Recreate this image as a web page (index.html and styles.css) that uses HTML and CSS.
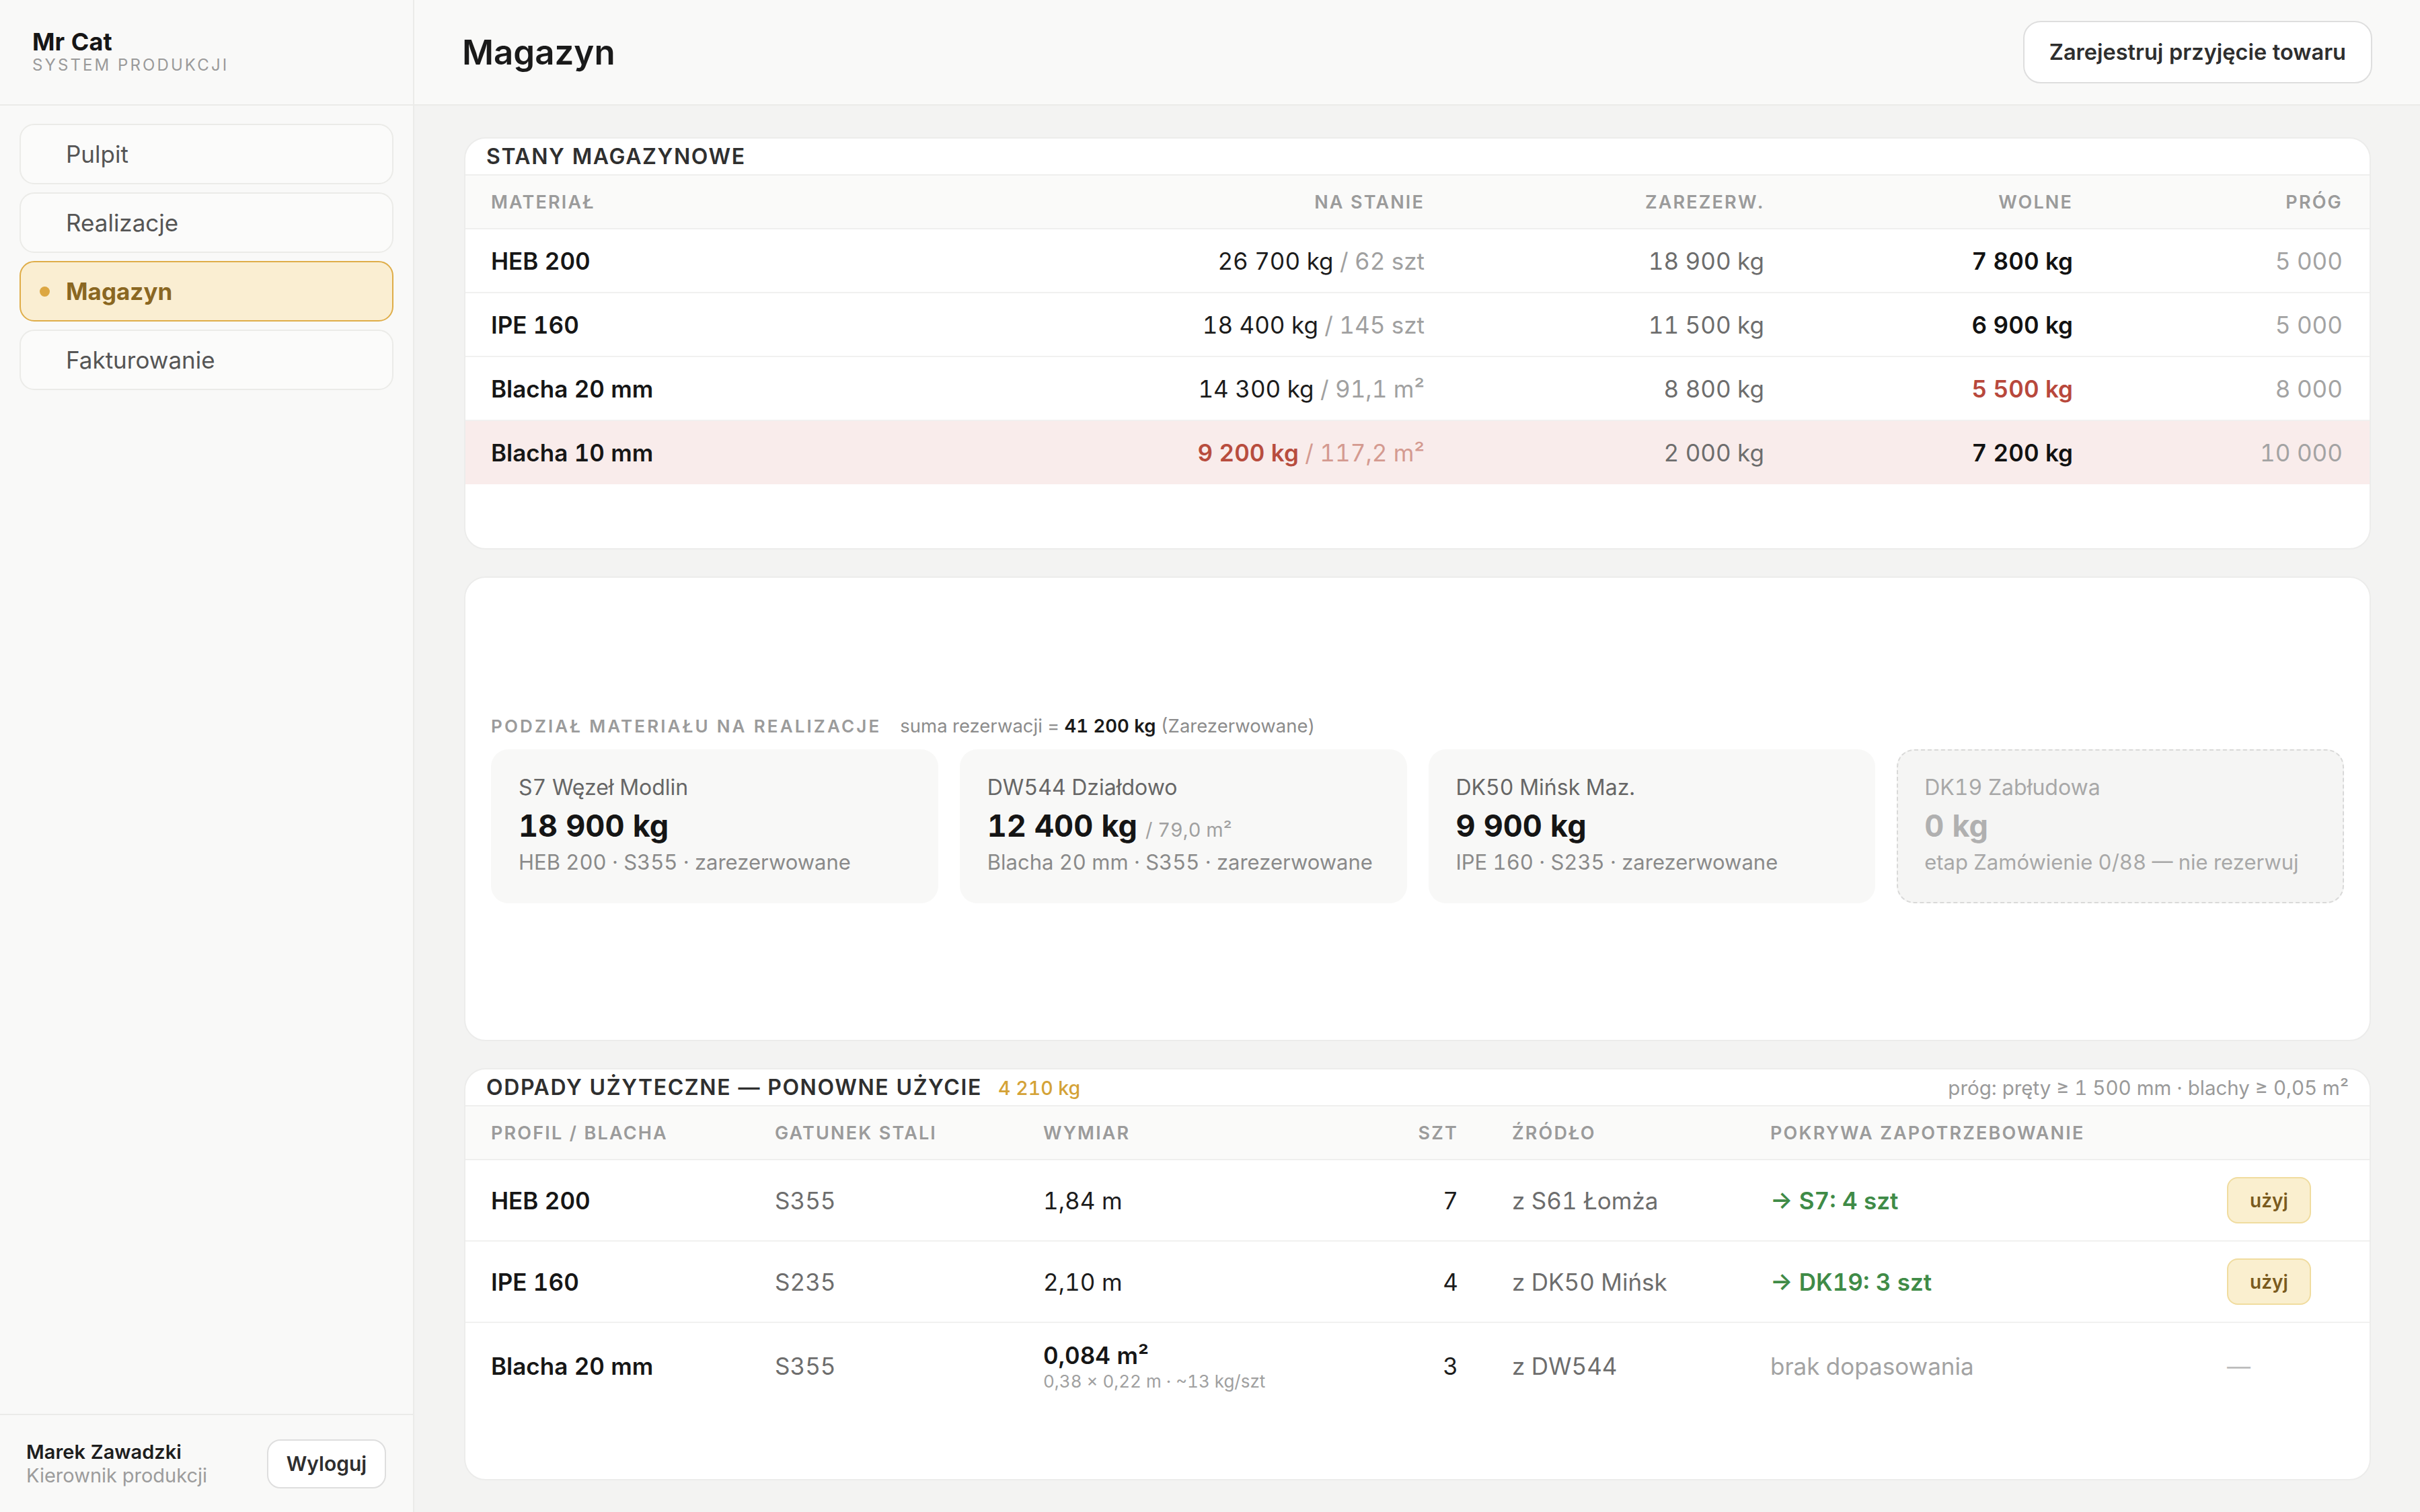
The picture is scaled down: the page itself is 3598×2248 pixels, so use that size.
FILE: index.html
```html
<!DOCTYPE html>
<html lang="pl">
<head>
    <meta charset="UTF-8">
    <meta name="viewport" content="width=device-width, initial-scale=1.0">
    <title>Magazyn — Mr Cat</title>
    <link rel="stylesheet" href="styles.css">
</head>
<body>
    <aside class="sidebar">
        <div class="brand">
            <div class="brand-name">Mr Cat</div>
            <div class="brand-sub">System produkcji</div>
        </div>
        <nav class="nav">
            <a class="nav-item" href="#">Pulpit</a>
            <a class="nav-item" href="#">Realizacje</a>
            <a class="nav-item active" href="#">Magazyn</a>
            <a class="nav-item" href="#">Fakturowanie</a>
        </nav>
        <div class="user">
            <div>
                <div class="user-name">Marek Zawadzki</div>
                <div class="user-role">Kierownik produkcji</div>
            </div>
            <button class="btn btn-small">Wyloguj</button>
        </div>
    </aside>

    <main class="main">
        <header class="topbar">
            <h1>Magazyn</h1>
            <button class="btn">Zarejestruj przyjęcie towaru</button>
        </header>

        <div class="content">
            <!-- Stany magazynowe -->
            <section class="card">
                <div class="card-head">
                    <h2>Stany magazynowe</h2>
                </div>
                <table class="table stock">
                    <colgroup>
                        <col style="width: 776px">
                        <col style="width: 690px">
                        <col style="width: 505px">
                        <col style="width: 459px">
                        <col style="width: 401px">
                    </colgroup>
                    <thead>
                        <tr>
                            <th>Materiał</th>
                            <th class="num">Na stanie</th>
                            <th class="num">Zarezerw.</th>
                            <th class="num">Wolne</th>
                            <th class="num">Próg</th>
                        </tr>
                    </thead>
                    <tbody>
                        <tr>
                            <td class="name">HEB 200</td>
                            <td class="num">26 700 kg <span class="unit">/ 62 szt</span></td>
                            <td class="num muted">18 900 kg</td>
                            <td class="num strong">7 800 kg</td>
                            <td class="num faint">5 000</td>
                        </tr>
                        <tr>
                            <td class="name">IPE 160</td>
                            <td class="num">18 400 kg <span class="unit">/ 145 szt</span></td>
                            <td class="num muted">11 500 kg</td>
                            <td class="num strong">6 900 kg</td>
                            <td class="num faint">5 000</td>
                        </tr>
                        <tr>
                            <td class="name">Blacha 20 mm</td>
                            <td class="num">14 300 kg <span class="unit">/ 91,1 m²</span></td>
                            <td class="num muted">8 800 kg</td>
                            <td class="num strong red">5 500 kg</td>
                            <td class="num faint">8 000</td>
                        </tr>
                        <tr class="low">
                            <td class="name">Blacha 10 mm</td>
                            <td class="num"><span class="red-val">9 200 kg</span> <span class="unit">/ 117,2 m²</span></td>
                            <td class="num muted">2 000 kg</td>
                            <td class="num strong">7 200 kg</td>
                            <td class="num faint">10 000</td>
                        </tr>
                    </tbody>
                </table>
            </section>

            <!-- Podział materiału -->
            <section class="card split">
                <div class="split-head">
                    <span class="label">Podział materiału na realizacje</span>
                    <span class="sum">suma rezerwacji = <b>41 200 kg</b> (Zarezerwowane)</span>
                </div>
                <div class="alloc-grid">
                    <div class="alloc">
                        <div class="alloc-name">S7 Węzeł Modlin</div>
                        <div class="alloc-val">18 900 kg</div>
                        <div class="alloc-meta">HEB 200 · S355 · zarezerwowane</div>
                    </div>
                    <div class="alloc">
                        <div class="alloc-name">DW544 Działdowo</div>
                        <div class="alloc-val">12 400 kg <span class="alloc-extra">/ 79,0 m²</span></div>
                        <div class="alloc-meta">Blacha 20 mm · S355 · zarezerwowane</div>
                    </div>
                    <div class="alloc">
                        <div class="alloc-name">DK50 Mińsk Maz.</div>
                        <div class="alloc-val">9 900 kg</div>
                        <div class="alloc-meta">IPE 160 · S235 · zarezerwowane</div>
                    </div>
                    <div class="alloc empty">
                        <div class="alloc-name">DK19 Zabłudowa</div>
                        <div class="alloc-val">0 kg</div>
                        <div class="alloc-meta">etap Zamówienie 0/88 — nie rezerwuj</div>
                    </div>
                </div>
            </section>

            <!-- Odpady -->
            <section class="card">
                <div class="card-head">
                    <h2>Odpady użyteczne — ponowne użycie <span class="gold">4 210 kg</span></h2>
                    <span class="note">próg: pręty ≥ 1 500 mm · blachy ≥ 0,05 m²</span>
                </div>
                <table class="table waste">
                    <colgroup>
                        <col style="width: 420px">
                        <col style="width: 399px">
                        <col style="width: 545px">
                        <col style="width: 152px">
                        <col style="width: 384px">
                        <col style="width: 679px">
                        <col style="width: 252px">
                    </colgroup>
                    <thead>
                        <tr>
                            <th>Profil / blacha</th>
                            <th>Gatunek stali</th>
                            <th>Wymiar</th>
                            <th class="num">Szt</th>
                            <th>Źródło</th>
                            <th>Pokrywa zapotrzebowanie</th>
                            <th></th>
                        </tr>
                    </thead>
                    <tbody>
                        <tr>
                            <td class="name">HEB 200</td>
                            <td class="muted">S355</td>
                            <td>1,84 m</td>
                            <td class="num">7</td>
                            <td class="muted">z S61 Łomża</td>
                            <td class="match">→ S7: 4 szt</td>
                            <td><button class="use">użyj</button></td>
                        </tr>
                        <tr>
                            <td class="name">IPE 160</td>
                            <td class="muted">S235</td>
                            <td>2,10 m</td>
                            <td class="num">4</td>
                            <td class="muted">z DK50 Mińsk</td>
                            <td class="match">→ DK19: 3 szt</td>
                            <td><button class="use">użyj</button></td>
                        </tr>
                        <tr>
                            <td class="name">Blacha 20 mm</td>
                            <td class="muted">S355</td>
                            <td>
                                <div class="dim">0,084 m²</div>
                                <div class="dim-sub">0,38 × 0,22 m · ~13 kg/szt</div>
                            </td>
                            <td class="num">3</td>
                            <td class="muted">z DW544</td>
                            <td class="faint">brak dopasowania</td>
                            <td class="dash">—</td>
                        </tr>
                    </tbody>
                </table>
            </section>
        </div>
    </main>
</body>
</html>
```

FILE: styles.css
```css
* {
    box-sizing: border-box;
}
body {
    margin: 0;
    height: 100vh;
    display: grid;
    grid-template-columns: 616px 1fr;
    font-family: Inter, 'Noto Sans', sans-serif;
    font-size: 35px;
    font-variant-numeric: tabular-nums;
    color: #1c1c1c;
    background: #f3f3f2;
}
button {
    font-family: inherit;
    font-variant-numeric: inherit;
    cursor: pointer;
}

/* sidebar */
.sidebar {
    display: flex;
    flex-direction: column;
    background: #f9f9f8;
    border-right: 2px solid #ebebe9;
}
.brand {
    height: 157px;
    padding: 40px 48px 0;
    border-bottom: 2px solid #ebebe9;
}
.brand-name {
    font-size: 36px;
    font-weight: 700;
    color: #161616;
}
.brand-sub {
    margin-top: -2px;
    font-size: 24px;
    letter-spacing: 0.13em;
    text-transform: uppercase;
    color: #9a9a9a;
}
.nav {
    display: flex;
    flex-direction: column;
    gap: 12px;
    padding: 27px 29px;
}
.nav-item {
    display: flex;
    align-items: center;
    gap: 24px;
    height: 90px;
    padding-left: 28px;
    border: 2px solid #ebebe8;
    border-radius: 22px;
    background: #fbfbfa;
    color: #555;
    text-decoration: none;
}
.nav-item::before {
    content: "";
    width: 15px;
    height: 15px;
    border-radius: 50%;
}
.nav-item.active {
    background: #faeed2;
    border-color: #dfad48;
    color: #8a6722;
    font-weight: 700;
}
.nav-item.active::before {
    background: #dca743;
}
.user {
    margin-top: auto;
    height: 146px;
    display: flex;
    align-items: center;
    justify-content: space-between;
    padding: 0 40px 0 39px;
    border-top: 2px solid #ebebe9;
}
.user-name {
    font-size: 29px;
    font-weight: 600;
    color: #1e1e1e;
}
.user-role {
    font-size: 29px;
    color: #9c9c9c;
}
.btn {
    height: 93px;
    padding: 0 37px;
    background: #fff;
    border: 2px solid #dedede;
    border-radius: 26px;
    font-size: 32.5px;
    font-weight: 600;
    color: #2e2e2e;
}
.btn-small {
    width: 177px;
    height: 73px;
    padding: 0;
    border-radius: 20px;
    font-size: 30px;
}

/* main */
.main {
    display: flex;
    flex-direction: column;
    min-width: 0;
}
.topbar {
    height: 157px;
    flex: none;
    display: flex;
    align-items: center;
    justify-content: space-between;
    padding: 0 71px 0 71px;
    background: #f9f9f8;
    border-bottom: 2px solid #ebebe9;
}
.topbar h1 {
    margin: 0;
    font-size: 51px;
    font-weight: 600;
    color: #1a1a1a;
}
.content {
    flex: 1;
    display: grid;
    grid-template-rows: 1fr 691px 1fr;
    gap: 40px;
    padding: 47px 73px 47px 74px;
}
.card {
    background: #fff;
    border: 2px solid #ececeb;
    border-radius: 32px;
    overflow: hidden;
}
.card-head {
    height: 55px;
    display: flex;
    align-items: center;
    justify-content: space-between;
    padding: 0 31px;
    border-bottom: 2px solid #efefee;
}
.card-head h2 {
    margin: 0;
    font-size: 32px;
    font-weight: 600;
    letter-spacing: 0.05em;
    text-transform: uppercase;
    color: #2f2f2f;
}
.gold {
    margin-left: 14px;
    font-size: 28.5px;
    font-weight: 500;
    letter-spacing: 0;
    text-transform: none;
    color: #d4a237;
}
.note {
    font-size: 29.5px;
    color: #9a9a9a;
}

/* tables */
.table {
    width: 100%;
    table-layout: fixed;
    border-collapse: collapse;
}
.table th {
    height: 79px;
    padding: 0 40px;
    background: #fafaf9;
    border-bottom: 2px solid #efefee;
    font-size: 27px;
    font-weight: 600;
    letter-spacing: 0.08em;
    text-transform: uppercase;
    text-align: left;
    color: #9b9b9b;
}
.table td {
    padding: 0 40px;
    border-bottom: 2px solid #f1f1f0;
    white-space: nowrap;
}
.table th:first-child,
.table td:first-child {
    padding-left: 38px;
}
.table tbody tr:last-child td {
    border-bottom: none;
}
.table .num {
    text-align: right;
}
.stock td {
    height: 95px;
}
.waste td {
    height: 121px;
}
.waste tr:last-child td {
    height: 129px;
}
.name {
    font-weight: 600;
    color: #161616;
}
.unit {
    color: #a0a0a0;
}
.muted {
    color: #6d6d6d;
}
.faint {
    color: #a3a3a3;
}
.strong {
    font-weight: 600;
    color: #121212;
}
.strong.red {
    color: #b8483c;
}
.low td {
    background: #f9eceb;
}
.red-val {
    font-weight: 600;
    color: #b84d3e;
}
.low .unit {
    color: #d49a90;
}
.match {
    font-weight: 600;
    color: #3f8b47;
}
.use {
    height: 69px;
    padding: 0 32px;
    background: #faefcf;
    border: 2px solid #f0dc9f;
    border-radius: 16px;
    font-size: 28px;
    font-weight: 600;
    color: #7a5b1e;
}
.dash {
    color: #bdbdbd;
}
.dim {
    font-weight: 600;
    color: #161616;
}
.dim-sub {
    margin-top: 2px;
    font-size: 26px;
    color: #a0a0a0;
}

/* split card */
.split {
    display: flex;
    flex-direction: column;
    justify-content: center;
    padding: 0 38px;
}
.split-head {
    display: flex;
    align-items: baseline;
    gap: 28px;
    margin-bottom: 18px;
}
.label {
    font-size: 26px;
    font-weight: 600;
    letter-spacing: 0.12em;
    text-transform: uppercase;
    color: #9b9b9b;
}
.sum {
    font-size: 27.5px;
    color: #8c8c8c;
}
.sum b {
    font-weight: 600;
    color: #1a1a1a;
}
.alloc-grid {
    display: grid;
    grid-template-columns: repeat(4, 1fr);
    gap: 32px;
}
.alloc {
    height: 229px;
    padding: 35px 39px;
    background: #f8f8f7;
    border: 2px solid transparent;
    border-radius: 26px;
}
.alloc-name {
    font-size: 32px;
    color: #666;
}
.alloc-val {
    margin-top: 10px;
    font-size: 45px;
    font-weight: 700;
    color: #151515;
}
.alloc-extra {
    font-size: 29px;
    font-weight: 400;
    color: #a0a0a0;
}
.alloc-meta {
    margin-top: 8px;
    font-size: 31px;
    color: #8a8a8a;
}
.alloc.empty {
    background: #f5f5f4;
    border: 2px dashed #d9d9d8;
}
.alloc.empty .alloc-name,
.alloc.empty .alloc-meta {
    color: #a8a8a8;
}
.alloc.empty .alloc-val {
    color: #b0b0b0;
}
```
